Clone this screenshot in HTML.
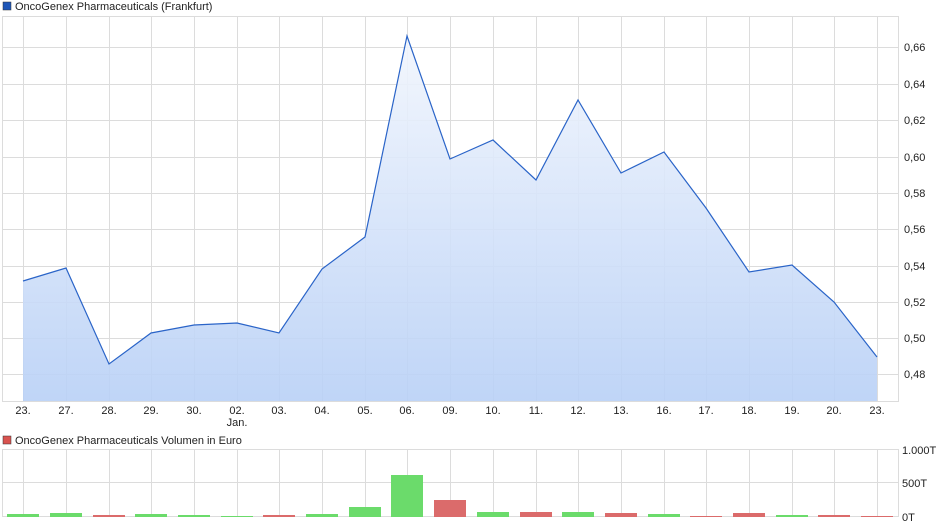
<!DOCTYPE html><html><head><style>body{margin:0;background:#fff;width:940px;height:526px;overflow:hidden}svg{display:block;font-family:"Liberation Sans",sans-serif}</style></head><body>
<svg width="940" height="526" xmlns="http://www.w3.org/2000/svg">
<defs><linearGradient id="g" x1="0" y1="0" x2="0" y2="1"><stop offset="0" stop-color="#f2f6fd"/><stop offset="1" stop-color="#b8d0f6"/></linearGradient></defs>
<rect x="3" y="2" width="8" height="8" fill="#1e56b8" stroke="#333" stroke-width="0.5"/>
<text x="15" y="10" font-size="11" fill="#222">OncoGenex Pharmaceuticals (Frankfurt)</text>
<g stroke="#dcdcdc" stroke-width="1" fill="none">
<rect x="2.5" y="16.5" width="896" height="385"/>
<path d="M23.5 16V401M66.5 16V401M109.5 16V401M151.5 16V401M194.5 16V401M237.5 16V401M279.5 16V401M322.5 16V401M365.5 16V401M407.5 16V401M450.5 16V401M493.5 16V401M536.5 16V401M578.5 16V401M621.5 16V401M664.5 16V401M706.5 16V401M749.5 16V401M792.5 16V401M834.5 16V401M877.5 16V401"/>
<path d="M2 47.5H898M2 84.5H898M2 120.5H898M2 157.5H898M2 193.5H898M2 229.5H898M2 266.5H898M2 302.5H898M2 338.5H898M2 374.5H898"/>
</g>
<path d="M23 281L66 268L109 364L151 333L194 325L237 323L279 333L322 269L365 237L407 36L450 159L493 140L536 180L578 100L621 173L664 152L706 208L749 272L792 265L834 302L877 357V401H23Z" fill="url(#g)" opacity="0.9"/>
<path d="M23 281L66 268L109 364L151 333L194 325L237 323L279 333L322 269L365 237L407 36L450 159L493 140L536 180L578 100L621 173L664 152L706 208L749 272L792 265L834 302L877 357" fill="none" stroke="#2a64c8" stroke-width="1.2"/>
<g font-size="11" fill="#222">
<text x="904" y="51">0,66</text><text x="904" y="88">0,64</text><text x="904" y="124">0,62</text><text x="904" y="161">0,60</text><text x="904" y="197">0,58</text><text x="904" y="233">0,56</text><text x="904" y="270">0,54</text><text x="904" y="306">0,52</text><text x="904" y="342">0,50</text><text x="904" y="378">0,48</text>
<g text-anchor="middle"><text x="23" y="414">23.</text><text x="66" y="414">27.</text><text x="109" y="414">28.</text><text x="151" y="414">29.</text><text x="194" y="414">30.</text><text x="237" y="414">02.</text><text x="237" y="426">Jan.</text><text x="279" y="414">03.</text><text x="322" y="414">04.</text><text x="365" y="414">05.</text><text x="407" y="414">06.</text><text x="450" y="414">09.</text><text x="493" y="414">10.</text><text x="536" y="414">11.</text><text x="578" y="414">12.</text><text x="621" y="414">13.</text><text x="664" y="414">16.</text><text x="706" y="414">17.</text><text x="749" y="414">18.</text><text x="792" y="414">19.</text><text x="834" y="414">20.</text><text x="877" y="414">23.</text></g>
<text x="902" y="454">1.000T</text><text x="902" y="487">500T</text><text x="902" y="521">0T</text>
</g>
<rect x="3" y="436" width="8" height="8" fill="#d9534f" stroke="#333" stroke-width="0.5"/>
<text x="15" y="444" font-size="11" fill="#222">OncoGenex Pharmaceuticals Volumen in Euro</text>
<g stroke="#dcdcdc" stroke-width="1" fill="none">
<path d="M2.5 449V517M898.5 449V517M2 449.5H898M2 482.5H898M2 516.5H898"/>
<path d="M23.5 449V517M66.5 449V517M109.5 449V517M151.5 449V517M194.5 449V517M237.5 449V517M279.5 449V517M322.5 449V517M365.5 449V517M407.5 449V517M450.5 449V517M493.5 449V517M536.5 449V517M578.5 449V517M621.5 449V517M664.5 449V517M706.5 449V517M749.5 449V517M792.5 449V517M834.5 449V517M877.5 449V517"/>
</g>
<g>
<rect x="7" y="514" width="32" height="3" fill="#6bdb6b"/>
<rect x="50" y="513" width="32" height="4" fill="#6bdb6b"/>
<rect x="93" y="515" width="32" height="2" fill="#db6b6b"/>
<rect x="135" y="514" width="32" height="3" fill="#6bdb6b"/>
<rect x="178" y="515" width="32" height="2" fill="#6bdb6b"/>
<rect x="221" y="516" width="32" height="1" fill="#6bdb6b"/>
<rect x="263" y="515" width="32" height="2" fill="#db6b6b"/>
<rect x="306" y="514" width="32" height="3" fill="#6bdb6b"/>
<rect x="349" y="507" width="32" height="10" fill="#6bdb6b"/>
<rect x="391" y="475" width="32" height="42" fill="#6bdb6b"/>
<rect x="434" y="500" width="32" height="17" fill="#db6b6b"/>
<rect x="477" y="512" width="32" height="5" fill="#6bdb6b"/>
<rect x="520" y="512" width="32" height="5" fill="#db6b6b"/>
<rect x="562" y="512" width="32" height="5" fill="#6bdb6b"/>
<rect x="605" y="513" width="32" height="4" fill="#db6b6b"/>
<rect x="648" y="514" width="32" height="3" fill="#6bdb6b"/>
<rect x="690" y="516" width="32" height="1" fill="#db6b6b"/>
<rect x="733" y="513" width="32" height="4" fill="#db6b6b"/>
<rect x="776" y="515" width="32" height="2" fill="#6bdb6b"/>
<rect x="818" y="515" width="32" height="2" fill="#db6b6b"/>
<rect x="861" y="516" width="32" height="1" fill="#db6b6b"/>
</g>
</svg></body></html>
